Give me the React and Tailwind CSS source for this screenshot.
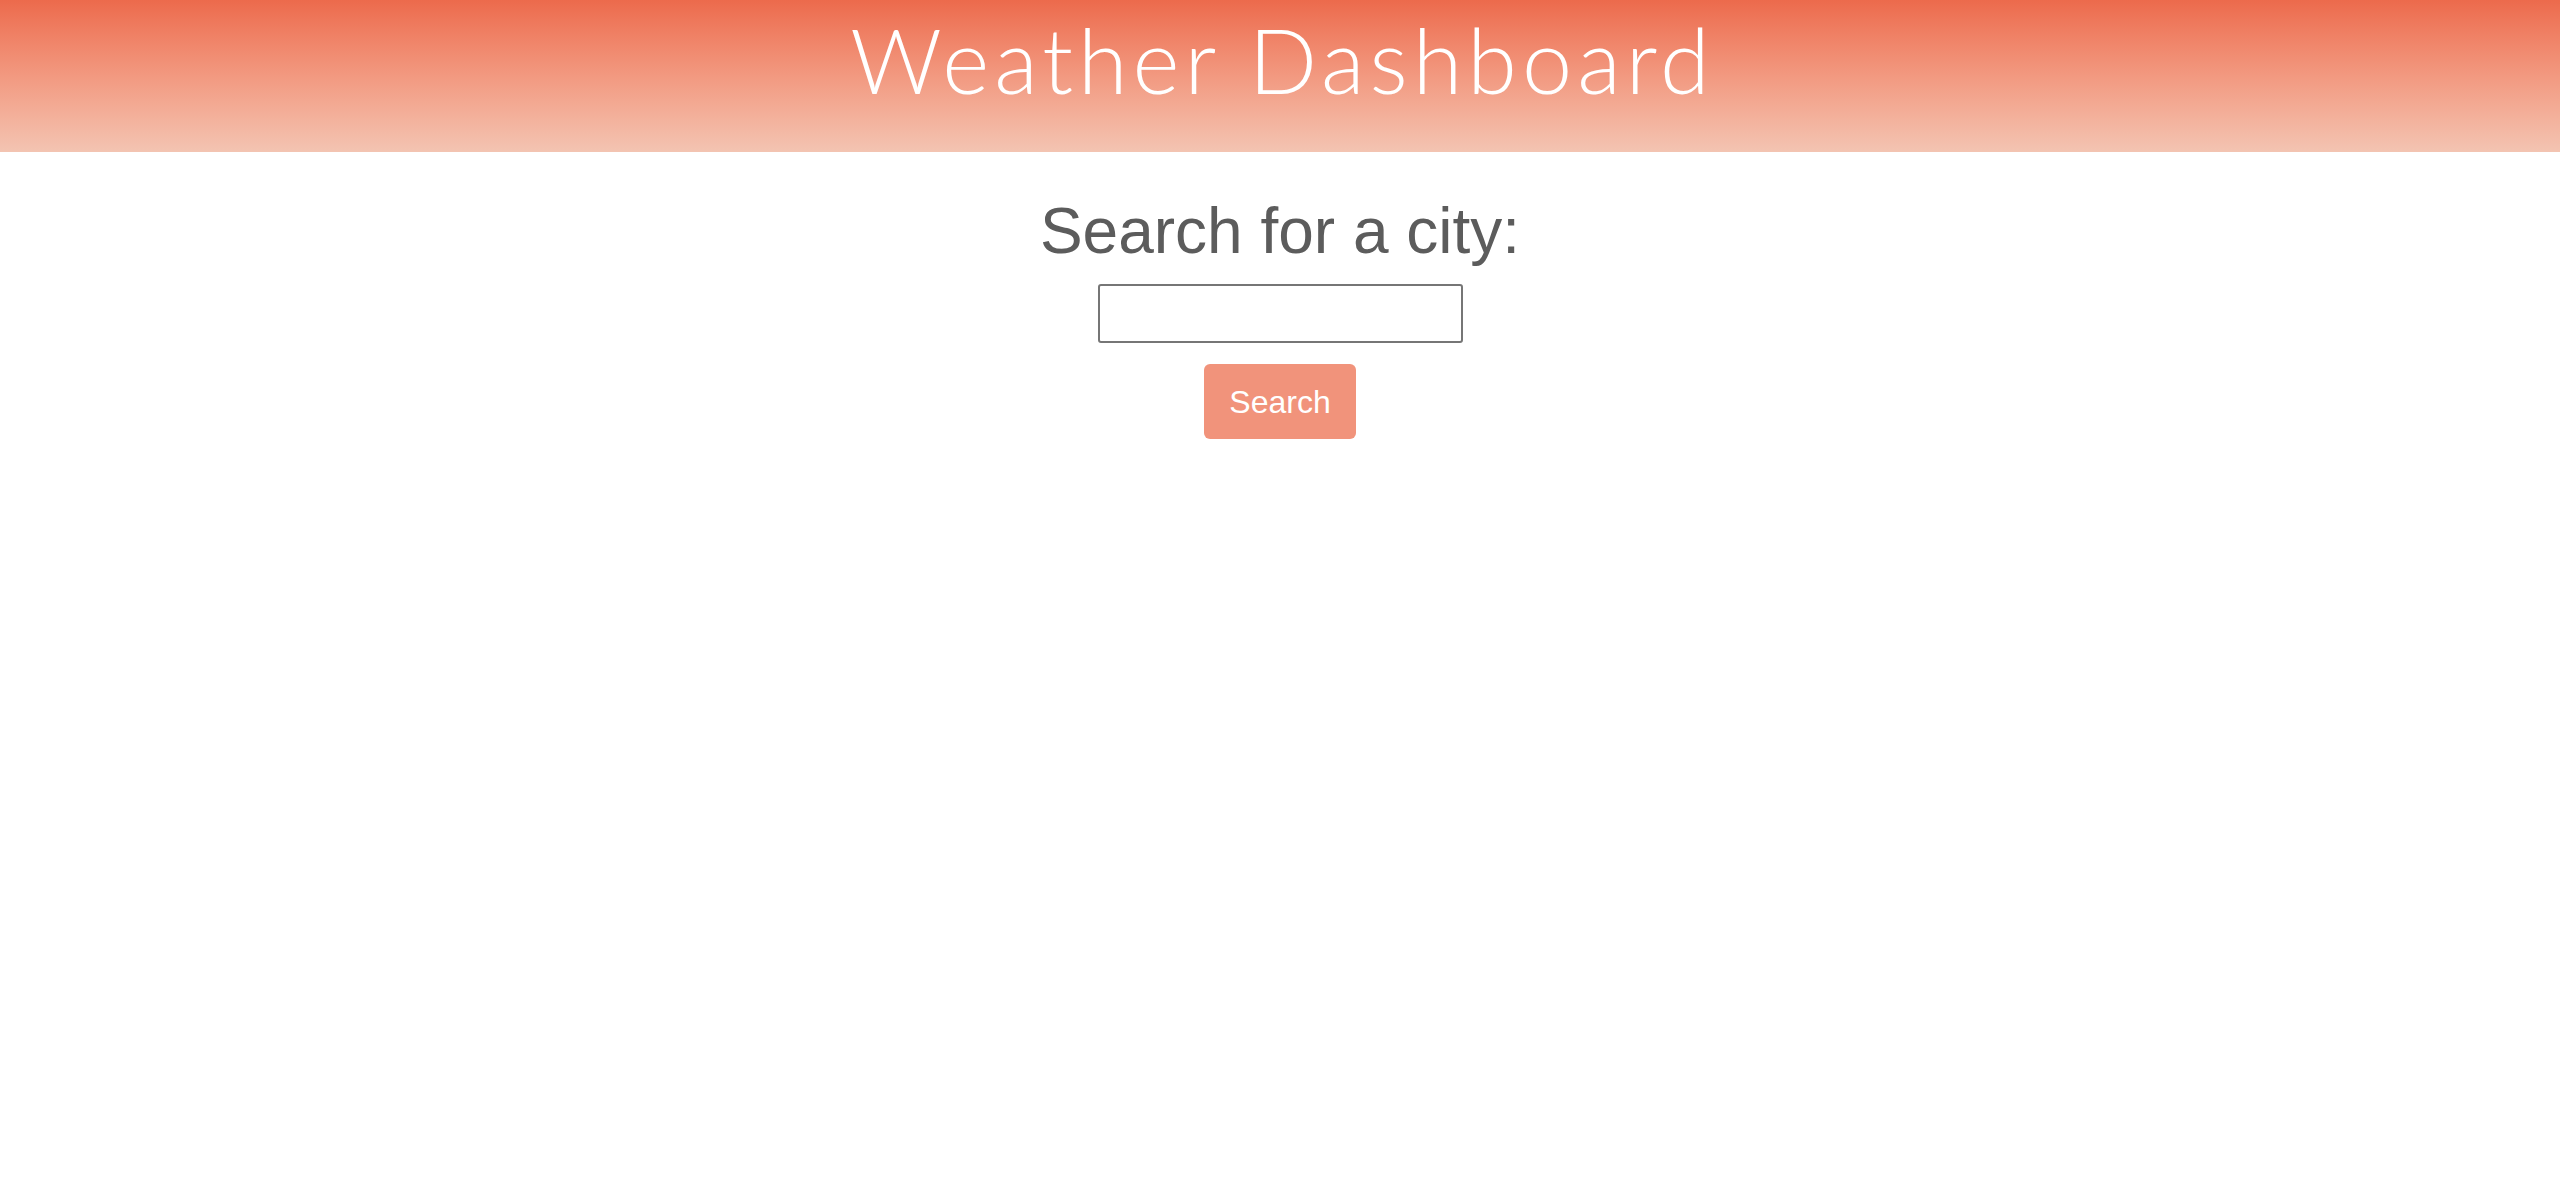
import React from 'react';

export default function App() {
  return (
    <div className="min-h-screen bg-white flex flex-col font-['Liberation_Sans',Arial,sans-serif]">
      {/* Header */}
      <header className="w-full h-[152px] bg-gradient-to-b from-[#ec6a4c] to-[#f3c4b2] flex items-center justify-center pb-[34px]">
        <h1 className="text-white text-[90px] leading-none font-light font-['Lato','Open_Sans',sans-serif] tracking-[5px] pl-[5px]">
          Weather Dashboard
        </h1>
      </header>

      {/* Search */}
      <main className="flex flex-col items-center">
        <h2 className="mt-[47px] text-[64px] leading-none text-[#5c5c5c]">Search for a city:</h2>
        <input
          type="text"
          className="mt-[21px] w-[365px] h-[59px] border-2 border-[#767676] rounded-[3px] px-2 text-[28px] outline-none"
        />
        <button className="mt-[21px] w-[152px] h-[75px] rounded-[6px] bg-[#f1937b] text-white text-[32px]">
          Search
        </button>
      </main>
    </div>
  );
}
